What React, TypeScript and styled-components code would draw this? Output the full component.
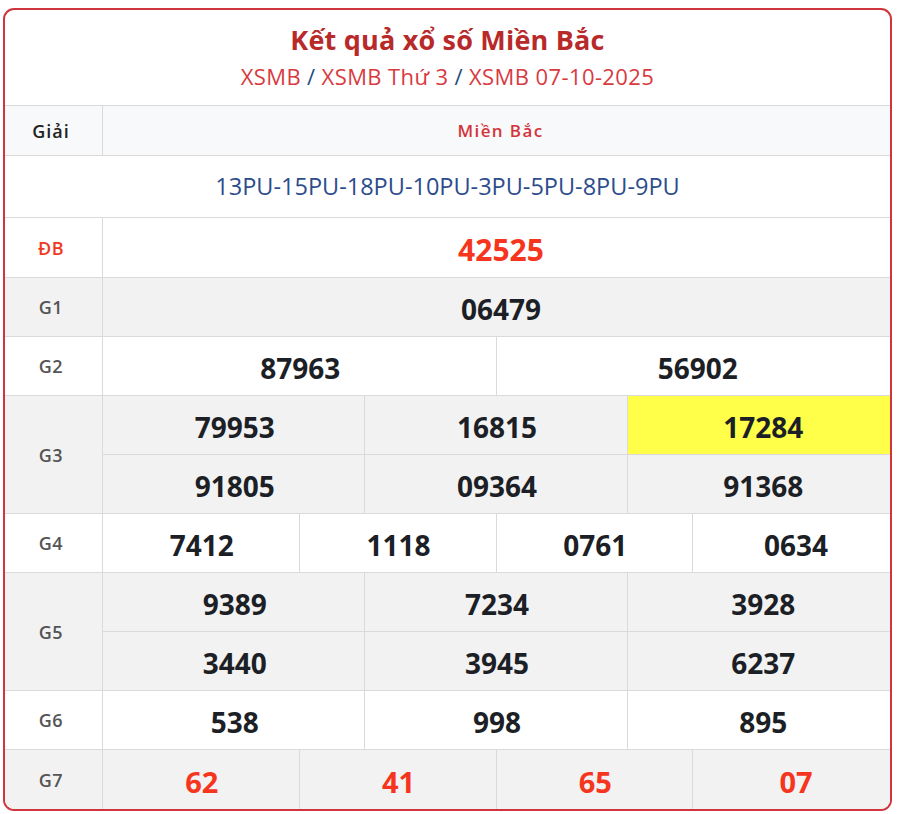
import React from 'react';
import styled, { createGlobalStyle } from 'styled-components';

const GlobalStyle = createGlobalStyle`
  * {
    box-sizing: border-box;
  }
  body {
    margin: 0;
    background: #ffffff;
    font-family: 'Open Sans', 'Noto Sans', Arial, sans-serif;
  }
`;

const StyledCard = styled.div`
  width: 889px;
  margin: 8px 0 0 3px;
  border: 2px solid #d0343c;
  border-radius: 11px;
  overflow: hidden;
  background: #ffffff;
`;

const StyledCardHeader = styled.div`
  height: 95px;
  display: flex;
  flex-direction: column;
  align-items: center;
  padding-top: 11px;
`;

const StyledTitle = styled.h1`
  margin: 0;
  font-size: 27px;
  line-height: 38px;
  font-weight: 700;
  letter-spacing: 0.2px;
  color: #b82a2a;
`;

const StyledBreadcrumb = styled.div`
  margin-top: 1px;
  font-size: 22px;
  line-height: 32px;
  letter-spacing: 0.4px;
  color: #1e4f80;
`;

const StyledCrumbLink = styled.a`
  color: #d83a3f;
  text-decoration: none;
`;

const StyledCrumbSep = styled.span`
  margin: 0 6px;
`;

const StyledRow = styled.div<{ $bg?: string }>`
  display: grid;
  grid-template-columns: 98px 1fr;
  border-top: 1px solid #dadada;
  background: ${(p) => p.$bg || '#ffffff'};
`;

const StyledLabel = styled.div<{ $red?: boolean }>`
  display: flex;
  align-items: center;
  justify-content: center;
  padding-right: 5px;
  border-right: 1px solid #dadada;
  font-size: 18px;
  font-weight: 600;
  letter-spacing: 0.5px;
  color: ${(p) => (p.$red ? '#ee3a22' : '#555555')};
`;

const StyledHeadLabel = styled(StyledLabel)`
  height: 49px;
  color: #222222;
  letter-spacing: 1px;
`;

const StyledHeadValue = styled.div`
  display: flex;
  align-items: center;
  justify-content: center;
  padding-left: 8px;
  font-size: 17px;
  font-weight: 600;
  letter-spacing: 1.4px;
  color: #d3343b;
`;

const StyledCodeRow = styled.div`
  height: 62px;
  border-top: 1px solid #dadada;
  display: flex;
  align-items: center;
  justify-content: center;
  font-size: 23.5px;
  font-weight: 500;
  color: #2c4c8c;
  padding-bottom: 2px;
`;

const StyledValues = styled.div<{ $cols: number; $h: number }>`
  display: grid;
  grid-template-columns: repeat(${(p) => p.$cols}, 1fr);

  & > div {
    height: ${(p) => p.$h}px;
    padding-left: 2px;
  }
  & > div:nth-child(${(p) => p.$cols}n) {
    padding-left: 9px;
  }
  & > div:nth-child(n + ${(p) => p.$cols + 1}) {
    border-top: 1px solid #dadada;
    height: ${(p) => p.$h + 1}px;
  }
  & > div:not(:nth-child(${(p) => p.$cols}n)) {
    border-right: 1px solid #dadada;
  }
`;

const StyledNumber = styled.div<{ $red?: boolean; $size: number; $highlight?: boolean }>`
  display: flex;
  align-items: center;
  justify-content: center;
  padding-top: 3px;
  font-size: ${(p) => p.$size}px;
  font-weight: 700;
  color: ${(p) => (p.$red ? '#f5351d' : '#1d1f26')};
  background: ${(p) => (p.$highlight ? '#ffff4a' : 'transparent')};
`;

type Prize = {
  label: string;
  cols: number;
  numbers: string[];
  red?: boolean;
  size?: number;
  height?: number;
  bg?: string;
  highlight?: string;
};

const prizes: Prize[] = [
  { label: 'ĐB', cols: 1, numbers: ['42525'], red: true, size: 30, height: 59 },
  { label: 'G1', cols: 1, numbers: ['06479'], bg: '#f2f2f2' },
  { label: 'G2', cols: 2, numbers: ['87963', '56902'] },
  { label: 'G3', cols: 3, numbers: ['79953', '16815', '17284', '91805', '09364', '91368'], bg: '#f2f2f2', highlight: '17284' },
  { label: 'G4', cols: 4, numbers: ['7412', '1118', '0761', '0634'] },
  { label: 'G5', cols: 3, numbers: ['9389', '7234', '3928', '3440', '3945', '6237'], bg: '#f2f2f2' },
  { label: 'G6', cols: 3, numbers: ['538', '998', '895'] },
  { label: 'G7', cols: 4, numbers: ['62', '41', '65', '07'], red: true, size: 29, height: 59, bg: '#f2f2f2' },
];

const App = () => {
  return (
    <>
      <GlobalStyle />
      <StyledCard>
        <StyledCardHeader>
          <StyledTitle>Kết quả xổ số Miền Bắc</StyledTitle>
          <StyledBreadcrumb>
            <StyledCrumbLink href="#">XSMB</StyledCrumbLink>
            <StyledCrumbSep>/</StyledCrumbSep>
            <StyledCrumbLink href="#">XSMB Thứ 3</StyledCrumbLink>
            <StyledCrumbSep>/</StyledCrumbSep>
            <StyledCrumbLink href="#">XSMB 07-10-2025</StyledCrumbLink>
          </StyledBreadcrumb>
        </StyledCardHeader>

        <StyledRow $bg="#f8f9fa">
          <StyledHeadLabel>Giải</StyledHeadLabel>
          <StyledHeadValue>Miền Bắc</StyledHeadValue>
        </StyledRow>

        <StyledCodeRow>13PU-15PU-18PU-10PU-3PU-5PU-8PU-9PU</StyledCodeRow>

        {prizes.map((prize) => (
          <StyledRow key={prize.label} $bg={prize.bg}>
            <StyledLabel $red={prize.label === 'ĐB'}>{prize.label}</StyledLabel>
            <StyledValues $cols={prize.cols} $h={prize.height || 58}>
              {prize.numbers.map((num, i) => (
                <StyledNumber
                  key={i}
                  $red={prize.red}
                  $size={prize.size || 28}
                  $highlight={prize.highlight === num}
                >
                  {num}
                </StyledNumber>
              ))}
            </StyledValues>
          </StyledRow>
        ))}
      </StyledCard>
    </>
  );
};

export default App;
